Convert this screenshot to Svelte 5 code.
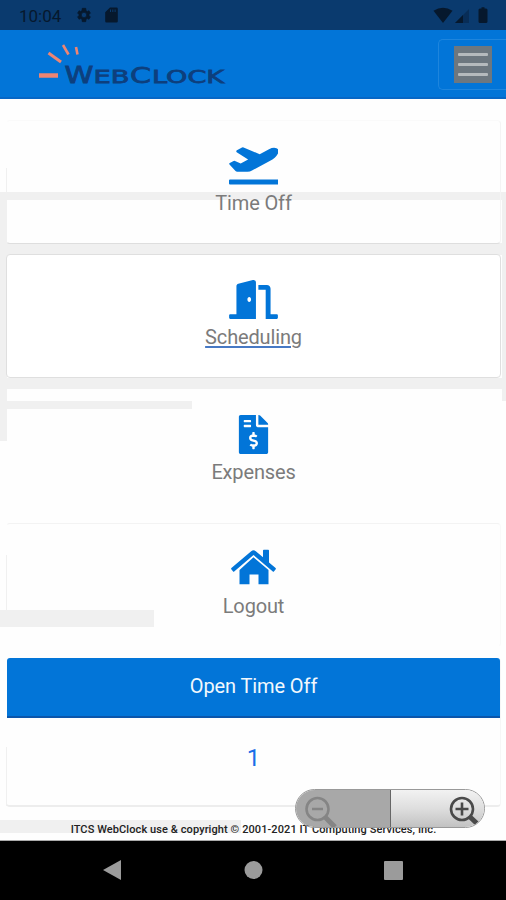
<script lang="ts">
  const tiles = [
    {
      label: 'Time Off',
      kind: 'first',
      box: '0 0 49 39',
      d: 'M1 33.5h47.500q1 0 1 1v3q0 1-1 1H1q-1 0-1-1v-3q0-1 1-1zM.8 17L4.600 15q.7-.3 1.400 0l5.700 2.500 7.400-4L7.700 6.200q-1-1.200.2-1.900L13 1.600q.8-.4 1.600-.1L30.700 8.200 40 3.200q4-2 7.500-1 2.800 1.300 1.800 4.600-2.300 5-8.600 8.200L23 24.500q-2 1.200-4.500 1.200H8.200q-1 0-1.700-.8L.5 18.500q-.7-1 .3-1.500z'
    },
    {
      label: 'Scheduling',
      kind: 'active',
      box: '0 0 640 512',
      d: 'M624 448h-80V113.45C544 86.19 522.47 64 496 64H384v64h96v384h144c8.84 0 16-7.16 16-16v-32c0-8.84-7.16-16-16-16zM312.24 1.01l-192 49.74C105.99 54.44 96 67.7 96 82.92V448H16c-8.84 0-16 7.16-16 16v32c0 8.84 7.16 16 16 16h336V33.18c0-21.58-19.56-37.41-39.76-32.17zM264 288c-13.25 0-24-14.33-24-32s10.75-32 24-32 24 14.33 24 32-10.75 32-24 32z'
    },
    {
      label: 'Expenses',
      kind: 'plain',
      box: '0 0 384 512',
      d: 'M377 105L279.1 7c-4.5-4.5-10.6-7-17-7H256v128h128v-6.1c0-6.3-2.5-12.4-7-16.9zm-153 31V0H24C10.7 0 0 10.7 0 24v464c0 13.3 10.7 24 24 24h336c13.3 0 24-10.7 24-24V160H248c-13.2 0-24-10.8-24-24zM64 72c0-4.42 3.58-8 8-8h80c4.42 0 8 3.58 8 8v16c0 4.42-3.58 8-8 8H72c-4.42 0-8-3.58-8-8V72zm0 80v-16c0-4.42 3.58-8 8-8h80c4.42 0 8 3.58 8 8v16c0 4.42-3.58 8-8 8H72c-4.42 0-8-3.58-8-8zm144 263.88V440c0 4.42-3.58 8-8 8h-16c-4.42 0-8-3.58-8-8v-24.29c-11.29-.58-22.27-4.52-31.37-11.35-3.9-2.93-4.1-8.77-.57-12.14l11.75-11.21c2.77-2.64 6.89-2.76 10.13-.73 3.87 2.42 8.26 3.72 12.82 3.72h28.11c6.5 0 11.8-5.92 11.8-13.19 0-5.95-3.61-11.19-8.77-12.73l-45-13.5c-18.59-5.58-31.58-23.42-31.58-43.39 0-24.52 19.05-44.44 42.67-45.07V232c0-4.42 3.58-8 8-8h16c4.42 0 8 3.58 8 8v24.29c11.29.58 22.27 4.51 31.37 11.35 3.9 2.93 4.1 8.77.57 12.14l-11.75 11.21c-2.77 2.64-6.89 2.76-10.13.73-3.87-2.43-8.26-3.72-12.82-3.72h-28.11c-6.5 0-11.8 5.92-11.8 13.19 0 5.95 3.61 11.19 8.77 12.73l45 13.5c18.59 5.58 31.58 23.42 31.58 43.39 0 24.53-19.05 44.44-42.67 45.07z'
    },
    {
      label: 'Logout',
      kind: 'faint',
      box: '0 0 49 39',
      d: 'M24.5 8.3L39.5 21v14.2h-10V25.5h-9v9.7h-10V21zM2.3 20.2l1.8 2.2c.3.3.8.3 1.1 0L24.5 6 43.8 22.4c.4.3.8.3 1.1 0l1.8-2.2c.3-.4.2-.8-.1-1.1L40 13.4V1.5c0-.5-.3-.8-.8-.8h-4.4c-.5 0-.8.3-.8.8v6.8l-7.2-6a3.6 3.6 0 0 0-4.6 0L2.4 19.1c-.3.3-.4.7-.1 1.1z'
    }
  ];

  // grey areas of the page behind the cards, relative to main
  const patches = [
    { x: 0, y: 93, w: 506, h: 8 },
    { x: 0, y: 101, w: 7, h: 241 },
    { x: 502, y: 101, w: 4, h: 201 },
    { x: 0, y: 144, w: 506, h: 12 },
    { x: 0, y: 279, w: 506, h: 11 },
    { x: 0, y: 302, w: 192, h: 8 },
    { x: 0, y: 511, w: 154, h: 17 },
    { x: 0, y: 721, w: 241, h: 13 },
    { x: 6, y: 69, w: 1, h: 75 },
    { x: 6, y: 456, w: 1, h: 55 },
    { x: 6, y: 648, w: 1, h: 59 }
  ];
</script>

<div class="screen">
  <div class="status">
    <span class="time">10:04</span>
    <svg class="gear" width="16" height="16" viewBox="0 0 24 24">
      <path fill-rule="evenodd" stroke="#06182d" d="M19.4 13c.1-.7.1-1.3 0-2l2.2-1.7-2.1-3.7-2.6 1.1a8 8 0 0 0-1.8-1L14.700 2h-5.400l-.4 3.700a8 8 0 0 0-1.800 1L4.500 5.600 2.400 9.300 4.600 11a8 8 0 0 0 0 2l-2.200 1.700 2.100 3.700 2.600-1.100a8 8 0 0 0 1.800 1l.4 3.700h5.400l.4-3.700a8 8 0 0 0 1.800-1l2.600 1.100 2.100-3.700zM12 16a4 4 0 1 1 0-8 4 4 0 0 1 0 8z" />
    </svg>
    <svg class="card-icon" width="13" height="16" viewBox="0 0 13 16">
      <path fill-rule="evenodd" d="M5 .5h6.500a1.300 1.300 0 0 1 1.300 1.300v12.400a1.300 1.300 0 0 1-1.300 1.300h-10A1.300 1.300 0 0 1 .2 14.200V5.300zM5 2.500v2.500h1V2.500zM7.300 2.500v2.500h1V2.500zM9.600 2.500v2.500h1V2.500z" />
    </svg>
    <span class="spacer"></span>
    <svg width="60" height="18" viewBox="0 0 60 18">
      <path d="M.5 4.800Q10 -1.500 19.500 4.800L10 17z" />
      <path d="M22 17L36 3v14z" opacity=".35" />
      <path d="M22 17l8-8v8z" />
      <path d="M48.500 2.500V1.300h3v1.200H53a1.500 1.500 0 0 1 1.500 1.500v11.500A1.500 1.500 0 0 1 53 17h-6a1.500 1.500 0 0 1-1.500-1.500V4A1.500 1.500 0 0 1 47 2.500z" />
    </svg>
  </div>

  <header>
    <svg class="logo" width="190" height="46" viewBox="0 0 190 46">
      <g stroke="#ee8573" fill="none">
        <path d="M1 33.500h19" stroke-width="4.500" />
        <path d="M10.500 11l12.500 9" stroke-width="3" />
        <path d="M25 3l5.500 9.500" stroke-width="2.600" />
        <path d="M38 5l1.500 7.500" stroke-width="2.600" />
      </g>
      <g class="wordmark">
        <text x="26.500" y="40.500" font-size="23" textLength="29" lengthAdjust="spacingAndGlyphs">W</text>
        <text x="55.500" y="40.500" font-size="18.500" textLength="36" lengthAdjust="spacingAndGlyphs">EB</text>
        <text x="92" y="40.500" font-size="22" textLength="21" lengthAdjust="spacingAndGlyphs">C</text>
        <text x="114" y="40.500" font-size="18.500" textLength="72" lengthAdjust="spacingAndGlyphs">LOCK</text>
      </g>
    </svg>
    <button class="toggler" aria-label="Menu">
      <span class="bars"><i></i><i></i><i></i></span>
    </button>
  </header>

  <main>
    {#each patches as p}
      <div class="patch" style="left: {p.x}px; top: {p.y}px; width: {p.w}px; height: {p.h}px;"></div>
    {/each}

    {#each tiles as t}
      <div class="tile {t.kind}">
        <svg class="icon" width="49" height="39" viewBox={t.box}><path d={t.d} /></svg>
        <span class="label">{t.label}</span>
      </div>
    {/each}

    <div class="summary">
      <div class="summary-head">Open Time Off</div>
      <div class="summary-body">1</div>
    </div>

    <footer>ITCS WebClock use &amp; copyright © 2001-2021 IT Computing Services, Inc.</footer>

    <div class="zoom">
      <div class="zoom-out">
        <svg width="36" height="32" viewBox="0 0 36 32">
          <circle cx="13.500" cy="13" r="11" />
          <path d="M8 13h11" />
          <path d="M21 21l10 10" stroke-width="5" />
        </svg>
      </div>
      <div class="zoom-in">
        <svg width="34" height="32" viewBox="0 0 34 32">
          <circle cx="14" cy="13" r="11" />
          <path d="M7.500 13h13M14 6.500v13" />
          <path d="M21.500 20.500l7.500 7" stroke-width="5" />
        </svg>
      </div>
    </div>
  </main>

  <nav>
    <svg width="506" height="58" viewBox="0 0 506 58">
      <path d="M103 29L121 19v20z" />
      <circle cx="253.500" cy="29" r="9" />
      <rect x="384" y="20" width="19" height="19" rx="1" />
    </svg>
  </nav>
</div>

<style>
  .screen {
    width: 506px;
    height: 900px;
    display: flex;
    flex-direction: column;
    overflow: hidden;
    background: #fefefe;
    font-family: Roboto, sans-serif;
  }

  .status {
    height: 30px;
    box-sizing: border-box;
    display: flex;
    align-items: center;
    padding: 0 13px 0 19px;
    background: #0a3a6e;
    color: #06182d;
    fill: #06182d;
  }
  .time {
    width: 57px;
    font-size: 17px;
    padding-top: 2px;
  }
  .gear {
    margin-right: 13px;
  }
  .spacer {
    flex: 1;
  }

  header {
    height: 69px;
    box-sizing: border-box;
    display: flex;
    justify-content: space-between;
    align-items: flex-start;
    padding: 9px 0 0 38px;
    background: #0275d8;
    border-bottom: 2px solid #0767c6;
  }
  .logo {
    margin-top: 3px;
  }
  .wordmark {
    font-family: 'DejaVu Sans', sans-serif;
    fill: #0d3f7d;
    stroke: #0d3f7d;
    stroke-width: 0.8;
  }
  .toggler {
    width: 68px;
    height: 51px;
    padding: 0 0 0 15px;
    background: none;
    border: 1px solid #1e85dd;
    border-right: 0;
    border-radius: 5px 0 0 5px;
    display: flex;
    align-items: center;
  }
  .bars {
    width: 38px;
    height: 37px;
    display: flex;
    flex-direction: column;
    align-items: center;
    justify-content: center;
    gap: 7px;
    background: #6d777f;
  }
  .bars i {
    width: 30px;
    height: 3px;
    border-radius: 1px;
    background: #b5babd;
  }

  main {
    position: relative;
    height: 742px;
    box-sizing: border-box;
    padding: 21px 5px 0 6px;
    border-bottom: 1px solid #aaa;
  }
  .patch {
    position: absolute;
    background: #f0f0f0;
  }

  .tile {
    position: relative;
    height: 124px;
    box-sizing: border-box;
    margin-bottom: 10.3px;
    padding-top: 25px;
    display: flex;
    flex-direction: column;
    align-items: center;
    border: 1px solid transparent;
    border-radius: 4px;
  }
  .tile.first {
    border-color: #fafafa #f4f4f4 #dedede transparent;
  }
  .tile.active {
    border-color: #dfdfdf;
    background: #fff;
  }
  .tile.faint {
    border-color: #f3f3f3 #f9f9f9 transparent transparent;
  }
  .icon {
    fill: #0275d8;
  }
  .label {
    margin-top: 6px;
    font-size: 20px;
    line-height: 24px;
    letter-spacing: -0.15px;
    color: #7b7b7b;
  }
  .active .label {
    text-decoration: underline;
    text-decoration-color: #4779c4;
    text-decoration-thickness: 1.5px;
    text-underline-offset: 2px;
  }

  .summary {
    position: relative;
    height: 149px;
    box-sizing: border-box;
    margin-top: 11.100px;
    border: 1px solid #f6f6f6;
    border-left-color: transparent;
    border-top: 0;
    border-bottom: 2px solid #ededed;
    border-radius: 4px;
    text-align: center;
  }
  .summary-head {
    height: 60px;
    box-sizing: border-box;
    line-height: 57px;
    font-size: 20px;
    letter-spacing: -0.1px;
    color: #f2f8fd;
    background: #0275d8;
    border-bottom: 2px solid #0b56ab;
    border-radius: 3px 3px 0 0;
  }
  .summary-body {
    padding-top: 25px;
    font-size: 24px;
    line-height: 30px;
    color: #1b6ee8;
  }

  footer {
    position: relative;
    margin-top: 15px;
    text-align: center;
    font-size: 11px;
    font-weight: 500;
    line-height: 16px;
    letter-spacing: 0.09px;
    white-space: nowrap;
    color: #222;
  }

  /* zoom control floating over the footer */
  .zoom {
    position: absolute;
    left: 295px;
    top: 690px;
    width: 190px;
    height: 39px;
    box-sizing: border-box;
    display: flex;
    overflow: hidden;
    border: 1px solid #999;
    border-radius: 20px;
  }
  .zoom svg {
    fill: none;
    stroke: #4a4a4a;
    stroke-width: 2.600;
  }
  .zoom-out {
    width: 95px;
    box-sizing: border-box;
    padding: 6px 0 0 8px;
    background: #a8a8a8;
    border-right: 1px solid #666;
  }
  .zoom-out svg {
    stroke: #858585;
  }
  .zoom-in {
    flex: 1;
    padding: 6px 0 0 57px;
    background: linear-gradient(#f2f2f2, #dedede 50%, #c2c2c2);
  }

  nav {
    flex: 1;
    background: #000;
  }
  nav svg {
    display: block;
    fill: #9b9b9b;
  }
</style>
